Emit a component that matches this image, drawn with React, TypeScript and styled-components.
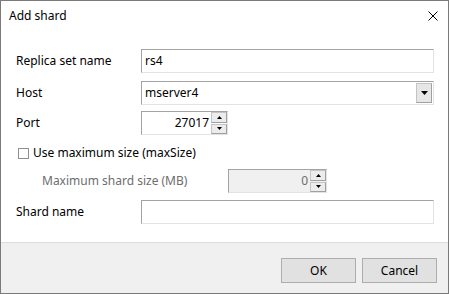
import React from 'react';
import styled, { createGlobalStyle } from 'styled-components';

const GlobalStyle = createGlobalStyle`
  html, body {
    margin: 0;
    padding: 0;
    background: #ffffff;
  }
  body {
    font-family: "Noto Sans", "Open Sans", sans-serif;
    font-size: 12px;
    color: #000;
  }
`;

const Window = styled.div`
  width: 449px;
  height: 294px;
  box-sizing: border-box;
  border: 1px solid #7a7a7a;
  background: #fff;
  display: flex;
  flex-direction: column;
`;

const TitleBar = styled.div`
  height: 30px;
  display: flex;
  align-items: center;
  justify-content: space-between;
  padding: 0 10px 0 8px;
  flex-shrink: 0;
`;

const Title = styled.span`
  font-size: 12px;
  line-height: 14px;
`;

const CloseButton = styled.div`
  width: 10px;
  height: 10px;
  display: flex;
  margin-top: -1px;
`;

const Body = styled.div`
  flex: 1;
  padding: 18px 14px 0 15px;
  display: flex;
  flex-direction: column;
`;

const Row = styled.div<{ $top?: number; $indent?: number }>`
  display: flex;
  align-items: center;
  margin-top: ${(p) => p.$top ?? 0}px;
  padding-left: ${(p) => p.$indent ?? 0}px;
`;

const Label = styled.label<{ $width: number; $disabled?: boolean }>`
  width: ${(p) => p.$width}px;
  flex-shrink: 0;
  line-height: 14px;
  color: ${(p) => (p.$disabled ? '#6d6d6d' : '#000')};
`;

const TextBox = styled.div<{ $width: number; $disabled?: boolean }>`
  width: ${(p) => p.$width}px;
  height: 24px;
  box-sizing: border-box;
  border: 1px solid;
  border-color: #a3a3a3 #e3e3e3 #e3e3e3 #a3a3a3;
  background: ${(p) => (p.$disabled ? '#f0f0f0' : '#fff')};
  display: flex;
  align-items: center;
  padding-left: 3px;
  color: ${(p) => (p.$disabled ? '#6d6d6d' : '#000')};
  line-height: 14px;
`;

const Value = styled.span<{ $right?: boolean }>`
  flex: 1;
  text-align: ${(p) => (p.$right ? 'right' : 'left')};
  padding-right: ${(p) => (p.$right ? 2 : 0)}px;
`;

const ComboBox = styled(TextBox)`
  padding-right: 1px;
`;

const DropButton = styled.div`
  width: 16px;
  height: 20px;
  box-sizing: border-box;
  border: 1px solid #c4c4c4;
  border-right-color: #a0a0a0;
  border-bottom-color: #a0a0a0;
  background: #e6e6e6;
  display: flex;
  align-items: center;
  justify-content: center;
`;

const SpinColumn = styled.div`
  width: 16px;
  height: 22px;
  display: flex;
  flex-direction: column;
  gap: 1px;
`;

const SpinButton = styled.div`
  flex: 1;
  box-sizing: border-box;
  border: 1px solid #c4c4c4;
  border-right-color: #a0a0a0;
  border-bottom-color: #a0a0a0;
  background: #ececec;
  display: flex;
  align-items: center;
  justify-content: center;
`;

const CheckRow = styled.label`
  display: flex;
  align-items: center;
  height: 20px;
  line-height: 14px;
  padding-left: 2px;
`;

const CheckBox = styled.span`
  width: 11px;
  height: 11px;
  box-sizing: border-box;
  border: 1px solid #8f8f8f;
  background: #fff;
  margin-right: 4px;
`;

const Footer = styled.div`
  height: 51px;
  box-sizing: border-box;
  flex-shrink: 0;
  border-top: 1px solid #dcdcdc;
  background: #f0f0f0;
  display: flex;
  justify-content: flex-end;
  align-items: flex-start;
  gap: 6px;
  padding: 15px 11px 0 0;
`;

const Button = styled.button`
  width: 75px;
  height: 25px;
  box-sizing: border-box;
  border: 1px solid #adadad;
  background: #e1e1e1;
  font-family: "Noto Sans", "Open Sans", sans-serif;
  font-size: 12px;
  color: #000;
  padding: 0;
`;

const Arrow: React.FC<{ up?: boolean; w?: number }> = ({ up, w = 7 }) => {
  const h = Math.ceil(w / 2);
  return (
    <svg width={w} height={h} viewBox={`0 0 ${w} ${h}`}>
      {up ? (
        <polygon points={`0,${h} ${w},${h} ${w / 2},0`} fill="#000" />
      ) : (
        <polygon points={`0,0 ${w},0 ${w / 2},${h}`} fill="#000" />
      )}
    </svg>
  );
};

const Spinner: React.FC = () => (
  <SpinColumn>
    <SpinButton>
      <Arrow up w={5} />
    </SpinButton>
    <SpinButton>
      <Arrow w={5} />
    </SpinButton>
  </SpinColumn>
);

export default function App() {
  return (
    <>
      <GlobalStyle />
      <Window>
        <TitleBar>
          <Title>Add shard</Title>
          <CloseButton>
            <svg width="10" height="10" viewBox="0 0 10 10">
              <path d="M0.5 0.5 L9.5 9.5 M9.5 0.5 L0.5 9.5" stroke="#000" strokeWidth="1" />
            </svg>
          </CloseButton>
        </TitleBar>
        <Body>
          <Row>
            <Label $width={125}>Replica set name</Label>
            <TextBox $width={294}>
              <Value>rs4</Value>
            </TextBox>
          </Row>
          <Row $top={8}>
            <Label $width={125}>Host</Label>
            <ComboBox $width={294}>
              <Value>mserver4</Value>
              <DropButton>
                <Arrow w={7} />
              </DropButton>
            </ComboBox>
          </Row>
          <Row $top={6}>
            <Label $width={125}>Port</Label>
            <TextBox $width={87}>
              <Value $right>27017</Value>
              <Spinner />
            </TextBox>
          </Row>
          <Row $top={8}>
            <CheckRow>
              <CheckBox />
              Use maximum size (maxSize)
            </CheckRow>
          </Row>
          <Row $top={6} $indent={26}>
            <Label $width={186} $disabled>
              Maximum shard size (MB)
            </Label>
            <TextBox $width={99} $disabled>
              <Value $right>0</Value>
              <Spinner />
            </TextBox>
          </Row>
          <Row $top={7}>
            <Label $width={125}>Shard name</Label>
            <TextBox $width={294} />
          </Row>
        </Body>
        <Footer>
          <Button>OK</Button>
          <Button>Cancel</Button>
        </Footer>
      </Window>
    </>
  );
}
